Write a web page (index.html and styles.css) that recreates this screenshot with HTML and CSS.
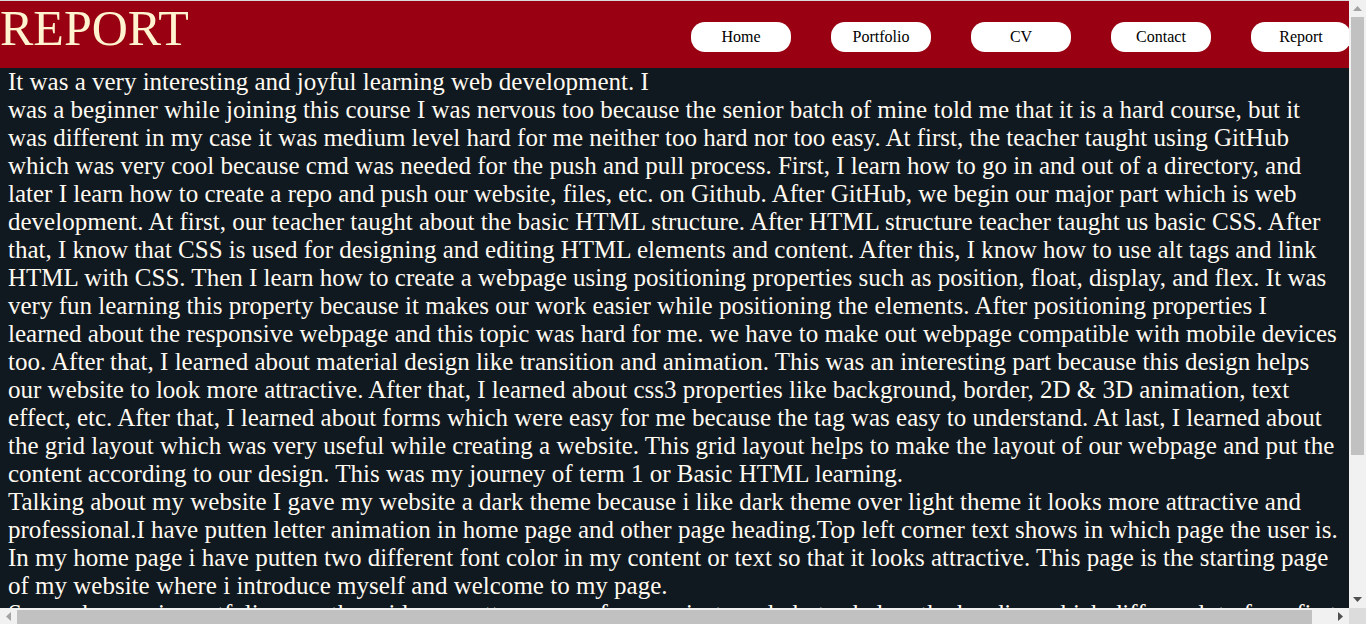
FILE: index.html
```html
<!DOCTYPE html>
<html lang="en">
<head>
<meta charset="utf-8">
<title>Report</title>
<link rel="stylesheet" href="styles.css">
</head>
<body>
<div class="frame">
  <div class="viewport">
    <header class="top">
      <h1 class="title">REPORT</h1>
      <nav class="nav">
        <a class="btn" href="#">Home</a>
        <a class="btn" href="#">Portfolio</a>
        <a class="btn" href="#">CV</a>
        <a class="btn" href="#">Contact</a>
        <a class="btn" href="#">Report</a>
      </nav>
    </header>
    <main class="content">
      <p class="para">It was a very interesting and joyful learning web development. I<br>was a beginner while joining this course I was nervous too because the senior batch of mine told me that it is a hard course, but it was different in my case it was medium level hard for me neither too hard nor too easy. At first, the teacher taught using GitHub which was very cool because cmd was needed for the push and pull process. First, I learn how to go in and out of a directory, and later I learn how to create a repo and push our website, files, etc. on Github. After GitHub, we begin our major part which is web development. At first, our teacher taught about the basic HTML structure. After HTML structure teacher taught us basic CSS. After that, I know that CSS is used for designing and editing HTML elements and content. After this, I know how to use alt tags and link HTML with CSS. Then I learn how to create a webpage using positioning properties such as position, float, display, and flex. It was very fun learning this property because it makes our work easier while positioning the elements. After positioning properties I learned about the responsive webpage and this topic was hard for me. we have to make out webpage compatible with mobile devices too. After that, I learned about material design like transition and animation. This was an interesting part because this design helps our website to look more attractive. After that, I learned about css3 properties like background, border, 2D &amp; 3D animation, text effect, etc. After that, I learned about forms which were easy for me because the tag was easy to understand. At last, I learned about the grid layout which was very useful while creating a website. This grid layout helps to make the layout of our webpage and put the content according to our design. This was my journey of term 1 or Basic HTML learning.</p>
      <p class="para">Talking about my website I gave my website a dark theme because i like dark theme over light theme it looks more attractive and professional.I have putten letter animation in home page and other page heading.Top left corner text shows in which page the user is. In my home page i have putten two different font color in my content or text so that it looks attractive. This page is the starting page of my website where i introduce myself and welcome to my page.</p>
      <p class="para">Some changes in portfolio page the grid was putten some of my projects and photos below the heading which differs a lot of my first portfolio page. In CV page i have putten my details, education and skills in a table so that it looks clean and easy to read.</p>
    </main>
  </div>
  <div class="vscroll">
    <div class="arrow">
      <svg width="9" height="5" viewBox="0 0 9 5"><path d="M0 5 L4.5 0 L9 5 Z" fill="#a3a3a3"/></svg>
    </div>
    <div class="vthumb"></div>
    <div class="fill"></div>
    <div class="arrow">
      <svg width="9" height="5" viewBox="0 0 9 5"><path d="M0 0 L9 0 L4.5 5 Z" fill="#505050"/></svg>
    </div>
  </div>
  <div class="hscroll">
    <div class="arrow">
      <svg width="5" height="9" viewBox="0 0 5 9"><path d="M5 0 L5 9 L0 4.5 Z" fill="#a3a3a3"/></svg>
    </div>
    <div class="hthumb"></div>
    <div class="fill"></div>
    <div class="arrow">
      <svg width="5" height="9" viewBox="0 0 5 9"><path d="M0 0 L5 4.5 L0 9 Z" fill="#505050"/></svg>
    </div>
  </div>
  <div class="corner"></div>
</div>
</body>
</html>
```

FILE: styles.css
```css
html, body {
  margin: 0;
  padding: 0;
}

body {
  height: 624px;
  overflow: hidden;
  background: #101820;
  font-family: "Liberation Serif", "Times New Roman", serif;
}

.frame {
  display: grid;
  grid-template-columns: 1349px 17px;
  grid-template-rows: 608px 16px;
}

.viewport {
  overflow: hidden;
  background: #101820;
}

.top {
  display: flex;
  justify-content: space-between;
  align-items: flex-start;
  width: 1370px;
  height: 67px;
  border-top: 1px solid #d9d9d9;
  background: #990011;
}

.title {
  margin: 0;
  font-size: 50px;
  font-weight: normal;
  line-height: 54px;
  color: #fff4cf;
}

.nav {
  display: flex;
  gap: 40px;
  padding: 21px 19px 0 0;
}

.btn {
  display: flex;
  align-items: center;
  justify-content: center;
  width: 100px;
  height: 30px;
  border-radius: 14px;
  background: #ffffff;
  color: #000000;
  font-size: 16px;
  text-decoration: none;
}

.content {
  padding: 0 8px;
}

.para {
  margin: 0;
  font-size: 25px;
  line-height: 28px;
  color: #fffaf0;
}

/* scrollbars */
.vscroll {
  display: flex;
  flex-direction: column;
  background: #f1f1f1;
}

.hscroll {
  display: flex;
  background: #f1f1f1;
}

.arrow {
  display: flex;
  align-items: center;
  justify-content: center;
  flex: 0 0 17px;
  height: 17px;
}

.hscroll .arrow {
  height: 16px;
}

.vthumb {
  flex: 0 0 438px;
  margin: 0 2px;
  background: #c1c1c1;
}

.hthumb {
  flex: 0 0 1295px;
  margin: 2px 0 0;
  background: #c1c1c1;
}

.fill {
  flex: 1 1 auto;
}

.corner {
  background: #dcdcdc;
}
```
